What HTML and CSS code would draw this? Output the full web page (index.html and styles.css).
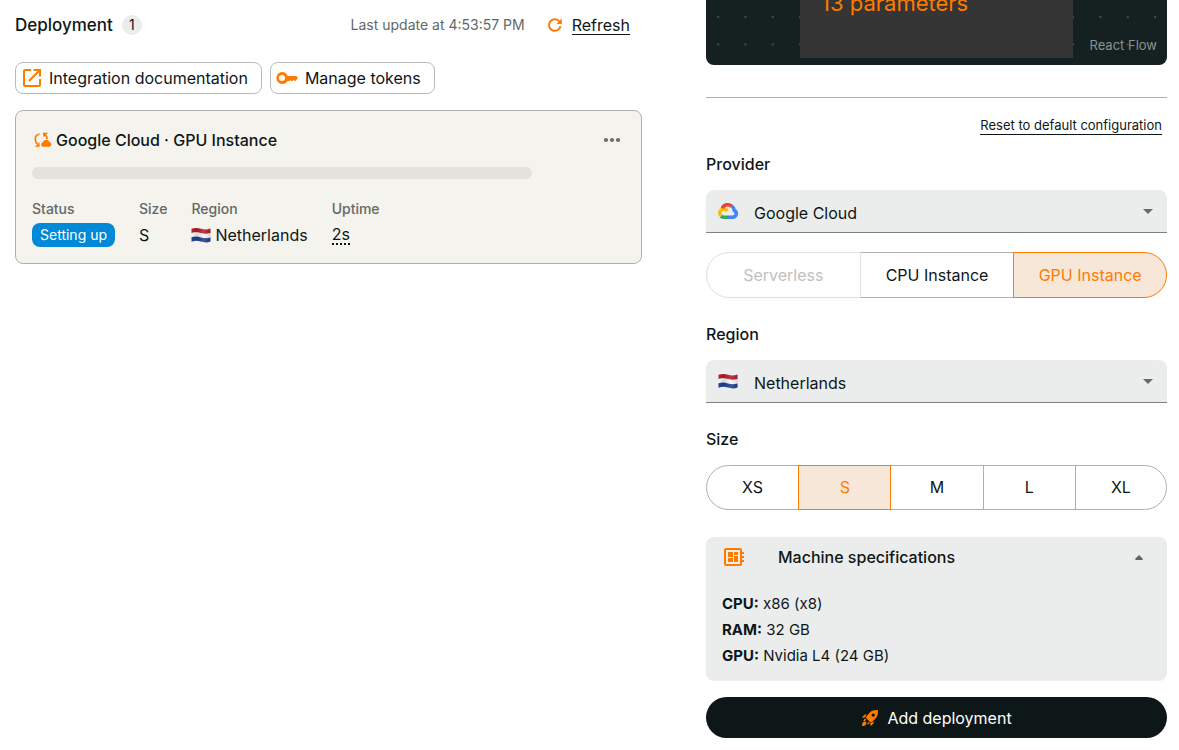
FILE: index.html
```html
<!DOCTYPE html>
<html lang="en">
<head>
<meta charset="utf-8">
<meta name="viewport" content="width=device-width, initial-scale=1">
<title>Deployment</title>
<link rel="stylesheet" href="styles.css">
</head>
<body>
<svg class="defs" aria-hidden="true">
  <defs>
    <linearGradient id="flag-shade" x1="0" x2="1" y1="0" y2="0">
      <stop offset="0" stop-color="#000" stop-opacity="0"/>
      <stop offset=".3" stop-color="#000" stop-opacity=".12"/>
      <stop offset=".65" stop-color="#fff" stop-opacity=".12"/>
      <stop offset="1" stop-color="#000" stop-opacity=".12"/>
    </linearGradient>
    <symbol id="flag-nl" viewBox="0 0 20 16">
      <path fill="#b2202d" d="M.5 1.8C4 .4 7 .8 10 1.7s6 1.2 9.500-.2v5C16 7.600 13 7.200 10 6.300S4 5 .5 6.300z"/>
      <path fill="#f5f5f5" d="M.5 5.800C4 4.700 7 5.100 10 6s6 1.200 9.500 0v4.500c-3.500 1.200-6.500.8-9.500 0s-6-1.200-9.500 0z"/>
      <path fill="#20418c" d="M.5 10.300c3.500-1.200 6.500-.8 9.500.1s6 1.200 9.500 0v4.200c-3.500 1.300-6.500.9-9.500 0s-6-1.200-9.500.2z"/>
      <path fill="url(#flag-shade)" d="M.5 1.800C4 .4 7 .8 10 1.700s6 1.200 9.500-.2v13.100c-3.500 1.300-6.500.9-9.500 0s-6-1.200-9.500.2z"/>
    </symbol>
  </defs>
</svg>

<div class="layout">
  <main class="deployments">
    <header class="page-head">
      <h1 class="heading title">Deployment</h1>
      <span class="count">1</span>
      <span class="updated">Last update at 4:53:57 PM</span>
      <button type="button" class="refresh">
        <svg width="16" height="16" viewBox="0 0 16 16" fill="none" stroke="currentColor" stroke-width="2" aria-hidden="true">
          <path d="M13.500 9.200A5.800 5.800 0 1 1 11.900 3.900l1.800 1.800"/>
          <path d="M14.800 1.600v5.300H9.500z" fill="currentColor" stroke="none"/>
        </svg>
        <span class="underlined">Refresh</span>
      </button>
    </header>

    <div class="actions">
      <button type="button" class="outline-button">
        <svg width="20" height="20" viewBox="0 0 20 20" fill="none" stroke="currentColor" stroke-width="2" aria-hidden="true">
          <path d="M9 2H3a1 1 0 0 0-1 1v14a1 1 0 0 0 1 1h14a1 1 0 0 0 1-1v-6M11.500 2H18v6.500M18 2 7 13"/>
        </svg>
        Integration documentation
      </button>
      <button type="button" class="outline-button">
        <svg class="key" width="22" height="14" viewBox="0 0 22 14" fill="currentColor" aria-hidden="true">
          <path fill-rule="evenodd" d="M6 1a6 6 0 0 1 5.600 4h8.600l1.800 2-2.700 3.200-1.700-1.200-1.500 1.400-1.500-1.400-1 1h-2A6 6 0 1 1 6 1zm0 3a3 3 0 1 0 0 6 3 3 0 0 0 0-6z"/>
        </svg>
        Manage tokens
      </button>
    </div>

    <article class="card">
      <div class="card-head">
        <svg width="18" height="16" viewBox="0 0 18 16" aria-hidden="true">
          <g fill="none" stroke="#ff7b00" stroke-width="1.700">
            <path d="M5.500 2C2 2.500 1.200 5 1.300 7.500c.1 2 .8 3.500 2.200 4.500"/>
            <path d="M10 2.500c2 .5 3 2 3 4.500"/>
          </g>
          <g fill="#ff7b00">
            <path d="M5.600 10.200v4.500H.9zM8.800.7h5.400L9.600 5.200z"/>
            <path d="M9.200 14.800a2.300 2.300 0 0 1-.4-4.500 3.500 3.500 0 0 1 6.600-.2 2.400 2.400 0 0 1-.1 4.700z"/>
          </g>
        </svg>
        <h2 class="heading">Google Cloud · GPU Instance</h2>
        <button type="button" class="more" aria-label="More options">
          <svg width="18" height="6" viewBox="0 0 18 6" fill="currentColor" aria-hidden="true">
            <circle cx="3" cy="3" r="2.100"/><circle cx="9" cy="3" r="2.100"/><circle cx="15" cy="3" r="2.100"/>
          </svg>
        </button>
      </div>
      <div class="skeleton"></div>
      <dl class="facts">
        <div class="fact"><dt>Status</dt><dd><span class="pill">Setting up</span></dd></div>
        <div class="fact"><dt>Size</dt><dd>S</dd></div>
        <div class="fact"><dt>Region</dt><dd><svg class="flag" width="20" height="16" aria-hidden="true"><use href="#flag-nl"/></svg>Netherlands</dd></div>
        <div class="fact"><dt>Uptime</dt><dd><span class="dotted">2s</span></dd></div>
      </dl>
    </article>
  </main>

  <aside class="config">
    <div class="flow">
      <svg class="flow-dots" width="100%" height="100%" aria-hidden="true">
        <defs>
          <pattern id="dots" x="-1.500" y="3.500" width="27.300" height="27.300" patternUnits="userSpaceOnUse">
            <circle cx="13.700" cy="13.700" r=".8" fill="#81898a"/>
          </pattern>
        </defs>
        <rect width="100%" height="100%" fill="url(#dots)"/>
      </svg>
      <div class="flow-node">13 parameters</div>
      <a class="flow-credit" href="#">React Flow</a>
    </div>

    <hr class="divider">
    <button type="button" class="reset">Reset to default configuration</button>

    <form class="form">
      <label class="heading field-label" for="provider">Provider</label>
      <div class="select">
        <svg class="select-icon" width="20" height="20" viewBox="0 0 20 20" fill="none" stroke-width="3.600" aria-hidden="true">
          <path stroke="#4285f4" d="M10 16.200h4.700a3.600 3.600 0 0 0 1.600-6.800c-.2-1.700-1-3.200-2.500-4.300"/>
          <path stroke="#34a853" d="M2.900 15.200c.8.700 1.700 1 2.800 1H10"/>
          <path stroke="#fbbc05" d="M9.200 10.200C8.200 8 5.800 7.400 4 8.300c-2.600 1.300-2.800 4.500-1.100 6.200"/>
          <path stroke="#ea4335" d="M4.300 7.200A6 6 0 0 1 13.800 5.300"/>
        </svg>
        <select id="provider"><option>Google Cloud</option></select>
        <svg class="select-arrow" width="10" height="5" viewBox="0 0 10 5" fill="currentColor" aria-hidden="true"><path d="M0 0h10L5 5z"/></svg>
      </div>

      <div class="segments kinds" role="radiogroup" aria-label="Instance type">
        <label class="segment"><input type="radio" name="kind" disabled><span>Serverless</span></label>
        <label class="segment"><input type="radio" name="kind"><span>CPU Instance</span></label>
        <label class="segment"><input type="radio" name="kind" checked><span>GPU Instance</span></label>
      </div>

      <label class="heading field-label" for="region">Region</label>
      <div class="select">
        <svg class="select-icon flag" width="20" height="16" aria-hidden="true"><use href="#flag-nl"/></svg>
        <select id="region"><option>Netherlands</option></select>
        <svg class="select-arrow" width="10" height="5" viewBox="0 0 10 5" fill="currentColor" aria-hidden="true"><path d="M0 0h10L5 5z"/></svg>
      </div>

      <h3 class="heading field-label" id="size-label">Size</h3>
      <div class="segments sizes" role="radiogroup" aria-labelledby="size-label">
        <label class="segment"><input type="radio" name="size"><span>XS</span></label>
        <label class="segment"><input type="radio" name="size" checked><span>S</span></label>
        <label class="segment"><input type="radio" name="size"><span>M</span></label>
        <label class="segment"><input type="radio" name="size"><span>L</span></label>
        <label class="segment"><input type="radio" name="size"><span>XL</span></label>
      </div>

      <section class="specs">
        <button type="button" class="specs-head heading" aria-expanded="true">
          <svg class="board" width="22" height="20" viewBox="0 0 22 20" fill="currentColor" aria-hidden="true">
            <path fill-rule="evenodd" d="M3 1h14a2 2 0 0 1 2 2v2h2v2h-2v2h2v2h-2v2h2v2h-2v2a2 2 0 0 1-2 2H3a2 2 0 0 1-2-2V3a2 2 0 0 1 2-2zm0 2v14h14V3z"/>
            <path d="M5 5h5v5H5zM11 5h4v3h-4zM5 11h5v4H5zM11 9h4v6h-4z"/>
          </svg>
          Machine specifications
          <svg class="specs-arrow" width="8" height="5" viewBox="0 0 8 5" fill="#5e6564" aria-hidden="true"><path d="M4 0l4 4-.6 1H.6L0 4z"/></svg>
        </button>
        <div class="specs-body">
          <p><strong>CPU:</strong> x86 (x8)</p>
          <p><strong>RAM:</strong> 32 GB</p>
          <p><strong>GPU:</strong> Nvidia L4 (24 GB)</p>
        </div>
      </section>

      <button type="button" class="submit">
        <svg width="18" height="18" viewBox="0 0 18 18" fill="#ff7b00" aria-hidden="true">
          <path fill-rule="evenodd" d="M17 1c.3 4.500-.8 7.200-3.600 9.700l-3.700 3L4.600 8.600l3-3.900C10 1.800 12.700.8 17 1zm-4.800 3.400a1.700 1.700 0 1 0 0 3.400 1.700 1.700 0 0 0 0-3.400z"/>
          <path d="M5.700 5.500 3.200 9 1 8.200 3.800 5.400zM12.700 12.300l-.1 2-2.800 2.800L9 14.800zM3.600 9.800l1.800.5-1.600 1.900-1.500-.4zM8.200 12.800l.3 1.800-1.800 1.200-.4-1.500zM2.200 13.200c1-1.100 3-.9 3.200.7.100 2-1.800 3.100-4.400 3.100 0-1.600.2-2.900 1.200-3.800z"/>
        </svg>
        Add deployment
      </button>
    </form>
  </aside>
</div>
</body>
</html>
```

FILE: styles.css
```css
* {
  box-sizing: border-box;
}

:root {
  --ink: #0e1718;
  --orange: #ff7b00;
  --tint: #f7e7d8;
  --grey: #ebedec;
  --line: #aeb0b0;
  --muted: #626867;
}

body {
  margin: 0;
  background: #fff;
  color: var(--ink);
  font: 400 16px/24px Inter, "Open Sans", sans-serif;
}

button,
select {
  font: inherit;
  color: inherit;
  border: 0;
  background: none;
  padding: 0;
  margin: 0;
  cursor: pointer;
}

svg {
  display: block;
  flex: none;
}

.defs {
  position: absolute;
  width: 0;
  height: 0;
}

.layout {
  display: grid;
  grid-template-columns: 627fr 461fr;
  gap: 64px;
  padding: 0 12px 12px 15px;
}

.heading {
  margin: 0;
  font-size: 16px;
  font-weight: 500;
  line-height: 24px;
}

.title {
  font-size: 17px;
}

.underlined {
  border-bottom: 1px solid var(--ink);
}

.deployments {
  padding-top: 12px;
}

.page-head {
  display: flex;
  align-items: center;
  height: 26px;
  padding-right: 12px;
}

.count {
  width: 20px;
  height: 20px;
  margin-left: 9px;
  border-radius: 50%;
  background: var(--grey);
  font-size: 14px;
  line-height: 20px;
  text-align: center;
}

.updated {
  margin-left: auto;
  color: var(--muted);
  font-size: 14px;
}

.refresh {
  display: flex;
  align-items: center;
  gap: 9px;
  margin-left: 22px;
}

.refresh .underlined {
  line-height: 18px;
}

.refresh svg,
.outline-button svg {
  color: var(--orange);
}

.actions {
  display: flex;
  gap: 8px;
  margin-top: 24px;
}

.outline-button {
  display: flex;
  align-items: center;
  gap: 7px;
  height: 32px;
  padding: 0 13px 0 6px;
  border: 1px solid #b9bbbb;
  border-radius: 8px;
}

.outline-button .key {
  margin-left: -1px;
}

.card {
  margin-top: 16px;
  padding: 16px;
  border: 1px solid var(--line);
  border-radius: 8px;
  background: #f4f3ee;
}

.card-head {
  display: flex;
  align-items: center;
  gap: 4px;
  height: 26px;
  padding: 0 4px 0 2px;
}

.more {
  margin-left: auto;
  color: #6c6e6b;
}

.skeleton {
  max-width: 500px;
  height: 12px;
  margin-top: 14px;
  border-radius: 8px;
  background: #e3e2dd;
}

.facts {
  display: flex;
  gap: 24px;
  margin: 20px 0 0;
}

.fact dt {
  margin-bottom: 4px;
  color: var(--muted);
  font-size: 14px;
  font-weight: 500;
  line-height: 20px;
}

.fact dd {
  display: flex;
  align-items: center;
  gap: 4px;
  height: 24px;
  margin: 0;
}

.pill {
  padding: 0 8px;
  border-radius: 8px;
  background: #0089d7;
  color: #fff;
  font-size: 14px;
}

.dotted {
  border-bottom: 2px dotted var(--ink);
  line-height: 17px;
}

.flow {
  position: relative;
  height: 65px;
  overflow: hidden;
  border-radius: 0 0 8px 8px;
  background: #152120;
}

.flow-dots {
  position: absolute;
  inset: 0;
}

.flow-node {
  position: absolute;
  top: -22px;
  left: 94px;
  width: 273px;
  height: 80px;
  padding: 8px 21px;
  background: #343534;
  color: var(--orange);
  font-size: 22px;
  line-height: 34px;
}

.flow-credit {
  position: absolute;
  right: 10px;
  bottom: 10px;
  color: #8b9191;
  font-size: 13px;
  line-height: 20px;
  text-decoration: none;
}

.divider {
  height: 1px;
  margin: 32px 0 0;
  border: 0;
  background: var(--line);
}

.reset {
  display: block;
  margin: 19px 5px 0 auto;
  font-size: 13px;
  line-height: 17px;
  border-bottom: 1px solid var(--ink);
}

.form {
  display: flex;
  flex-direction: column;
  margin-top: 17px;
}

.field-label {
  margin-bottom: 14px;
}

.select {
  display: flex;
  align-items: center;
  position: relative;
  height: 43px;
  border-bottom: 1px solid #7d8180;
  border-radius: 8px 8px 0 0;
  background: linear-gradient(var(--grey), var(--grey));
}

.select select {
  width: 100%;
  height: 100%;
  padding: 3px 32px 0 48px;
  appearance: none;
}

.select-icon,
.select-arrow {
  position: absolute;
  pointer-events: none;
}

.select-icon {
  left: 12px;
}

.select-arrow {
  right: 14px;
  color: #666b6a;
}

.segments {
  display: grid;
  grid-auto-flow: column;
  grid-auto-columns: 1fr;
}

.kinds {
  margin: 19px 0 24px;
}

.select + .field-label {
  margin-top: 24px;
}

.sizes {
  margin-bottom: 27px;
}

.segment {
  position: relative;
}

.segment:not(:last-child) {
  margin-right: -1px;
}

.segment input {
  position: absolute;
  inset: 0;
  margin: 0;
  opacity: 0;
}

.segment span {
  display: block;
  padding: 10px 0;
  border: 1px solid var(--line);
  text-align: center;
}

.sizes .segment span {
  line-height: 23px;
}

.segment:first-child span {
  border-radius: 24px 0 0 24px;
}

.segment:last-child span {
  border-radius: 0 24px 24px 0;
}

.segment input:disabled + span {
  border-color: #dfe0e0;
  color: #bfc1c1;
}

.segment:has(input:disabled),
.segment:has(input:checked) {
  z-index: 1;
}

.segment input:checked + span {
  border-color: var(--orange);
  background: var(--tint);
  color: var(--orange);
}

.specs {
  border-radius: 8px;
  background: var(--grey);
}

.specs-head {
  display: flex;
  align-items: center;
  width: 100%;
  height: 40px;
  padding: 0 24px 0 17px;
}

.specs-head .board {
  margin-right: 33px;
  color: var(--orange);
}

.specs-arrow {
  margin-left: auto;
}

.specs-body {
  padding: 14px 16px 12px;
}

.specs-body p {
  margin: 0;
  font-size: 15px;
  line-height: 26px;
}

.specs-body strong {
  font-weight: 700;
}

.submit {
  display: flex;
  align-items: center;
  justify-content: center;
  gap: 8px;
  height: 41px;
  margin-top: 16px;
  border-radius: 24px;
  background: #0e1718;
  color: #fff;
}
```
